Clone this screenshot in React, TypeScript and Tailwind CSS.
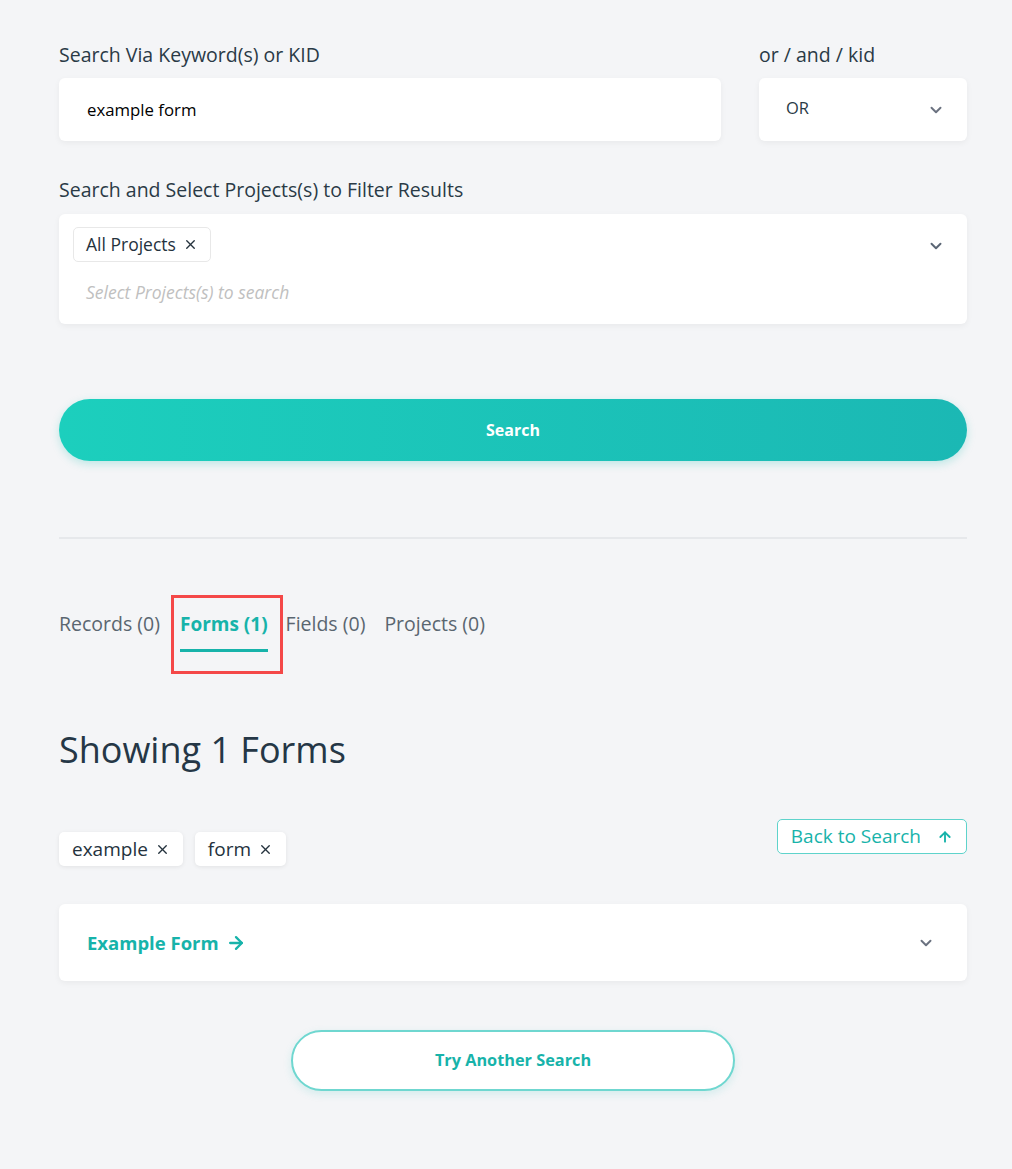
import { ChevronDown, X, ArrowUp, ArrowRight } from 'lucide-react';

const font = { fontFamily: '"Open Sans", "Noto Sans", sans-serif' };

function Chip({ label, className = '' }: { label: string; className?: string }) {
  return (
    <span
      className={`inline-flex items-center gap-[7px] bg-white rounded-[5px] shadow-[0_1px_4px_rgba(0,0,0,0.08)] text-[#24323d] ${className}`}
    >
      {label}
      <X className="w-[15px] h-[15px] text-[#24323d]" strokeWidth={2.2} />
    </span>
  );
}

export default function App() {
  return (
    <div className="min-h-[1169px] bg-[#f4f5f7]" style={font}>
      <div className="ml-[59px] w-[908px] pt-[43px]">
        <div className="flex gap-[38px]">
          <div className="flex-1">
            <label className="block text-[19.5px] leading-6 text-[#2a3a46]">Search Via Keyword(s) or KID</label>
            <div className="mt-[11px] h-[63px] bg-white rounded-[6px] shadow-[0_2px_6px_rgba(0,0,0,0.05)] flex items-center px-[28px] text-[16.8px] text-black">
              example form
            </div>
          </div>
          <div className="w-[208px]">
            <label className="block text-[19.5px] leading-6 text-[#2a3a46]">or / and / kid</label>
            <div className="mt-[11px] h-[63px] bg-white rounded-[6px] shadow-[0_2px_6px_rgba(0,0,0,0.05)] flex items-center justify-between pl-[27px] pr-[22px] text-[16.5px] text-[#2a3a46]">
              <span className="-mt-[3px]">OR</span>
              <ChevronDown className="w-[18px] h-[18px] text-[#6b7280]" strokeWidth={2.6} />
            </div>
          </div>
        </div>

        <label className="block mt-[37px] text-[19.5px] leading-6 text-[#2a3a46]">
          Search and Select Projects(s) to Filter Results
        </label>
        <div className="mt-[12px] h-[110px] bg-white rounded-[6px] shadow-[0_2px_6px_rgba(0,0,0,0.05)] pl-[14px] pr-[22px] pt-[13px] flex justify-between">
          <div>
            <Chip label="All Projects" className="h-[35px] px-[12px] text-[17.5px] border border-[#e8e8e8] shadow-none" />
            <div className="mt-[17px] ml-[13px] text-[17.5px] italic text-[#c0c0c0]">Select Projects(s) to search</div>
          </div>
          <ChevronDown className="mt-[10px] w-[18px] h-[18px] text-[#5b6675]" strokeWidth={2.6} />
        </div>

        <button className="mt-[75px] w-full h-[62px] rounded-full bg-gradient-to-r from-[#1ccfbd] to-[#1bb8b4] text-white font-bold text-[16px] shadow-[0_3px_8px_rgba(27,190,180,0.25)]">
          Search
        </button>

        <div className="mt-[76px] h-[2px] bg-[#e6e8eb]" />

        <div className="mt-[56px] flex items-start text-[19.5px] text-[#5a6670]">
          <span className="pt-[17px] leading-6">Records (0)</span>
          <div className="ml-[11px] border-[3px] border-[#f44848] pl-[6px] pr-[12px] pt-[14px] pb-[19px]">
            <span className="block text-[19px] text-[#17b3aa] font-bold border-b-[3px] border-[#17b3aa] pb-[13px] leading-6">Forms (1)</span>
          </div>
          <span className="pt-[17px] leading-6 ml-[3px]">Fields (0)</span>
          <span className="pt-[17px] leading-6 ml-[19px]">Projects (0)</span>
        </div>

        <h1 className="mt-[54px] text-[36px] leading-[44px] text-[#253746]">Showing 1 Forms</h1>

        <div className="mt-[47px] flex justify-between items-start">
          <div className="flex gap-[12px] mt-[13px]">
            <Chip label="example" className="h-[34px] px-[13px] text-[19px]" />
            <Chip label="form" className="h-[34px] px-[13px] text-[19px]" />
          </div>
          <button className="h-[35px] px-[13px] flex items-center gap-[16px] rounded-[5px] border border-[#5ed3cb] bg-white text-[19px] text-[#17b3aa]">
            Back to Search
            <ArrowUp className="w-[16px] h-[16px]" strokeWidth={2.8} />
          </button>
        </div>

        <div className="mt-[38px] h-[77px] bg-white rounded-[6px] shadow-[0_2px_6px_rgba(0,0,0,0.05)] flex items-center justify-between pl-[28px] pr-[32px]">
          <span className="flex items-center gap-[7px] text-[18.5px] font-bold text-[#17b3aa]">
            Example Form
            <ArrowRight className="w-[20px] h-[20px]" strokeWidth={2.8} />
          </span>
          <ChevronDown className="w-[18px] h-[18px] text-[#6b7280]" strokeWidth={2.6} />
        </div>

        <div className="mt-[49px] flex justify-center">
          <button className="w-[444px] h-[61px] rounded-full border-2 border-[#6fd7d0] bg-white text-[16.3px] font-bold text-[#17b3aa] shadow-[0_3px_8px_rgba(27,190,180,0.15)]">
            Try Another Search
          </button>
        </div>
      </div>
    </div>
  );
}
